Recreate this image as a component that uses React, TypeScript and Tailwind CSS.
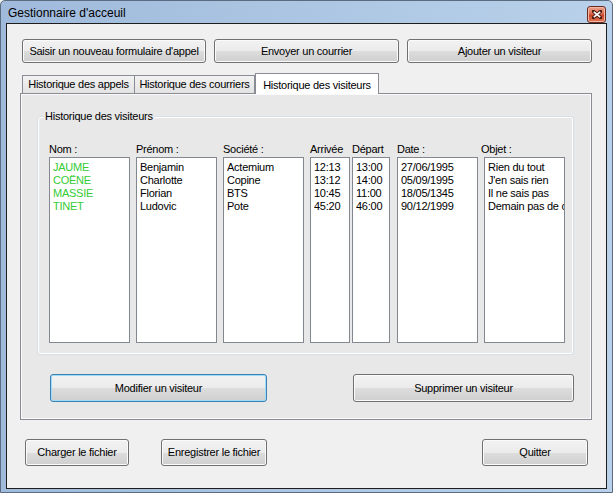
import React from "react";

const btnBase =
  "flex items-center justify-center rounded-[3px] border text-[11px] tracking-[-0.25px] text-black bg-[linear-gradient(#f2f2f2_0%,#ebebeb_50%,#dddddd_50%,#cfcfcf_100%)]";

function WinButton({
  children,
  className = "",
  focused = false,
}: {
  children: React.ReactNode;
  className?: string;
  focused?: boolean;
}) {
  return (
    <button
      className={`${btnBase} ${
        focused
          ? "border-[#3c7fb1] shadow-[inset_0_0_0_1px_#9fdcf8]"
          : "border-[#707070] shadow-[inset_0_0_0_1px_#fbfbfb]"
      } ${className}`}
    >
      {children}
    </button>
  );
}

const columns = [
  { label: "Nom :", w: "w-[81px]", ml: "ml-0", green: true, items: ["JAUME", "COËNE", "MASSIE", "TINET"] },
  { label: "Prénom :", w: "w-[81px]", ml: "ml-[6px]", items: ["Benjamin", "Charlotte", "Florian", "Ludovic"] },
  { label: "Société :", w: "w-[81px]", ml: "ml-[6px]", items: ["Actemium", "Copine", "BTS", "Pote"] },
  { label: "Arrivée", w: "w-[40px]", ml: "ml-[6px]", items: ["12:13", "13:12", "10:45", "45:20"] },
  { label: "Départ", w: "w-[38px]", ml: "ml-[2px]", items: ["13:00", "14:00", "11:00", "46:00"] },
  { label: "Date :", w: "w-[81px]", ml: "ml-[7px]", items: ["27/06/1995", "05/09/1995", "18/05/1345", "90/12/1999"] },
  {
    label: "Objet :",
    w: "w-[81px]",
    ml: "ml-[6px]",
    shiftLabel: true,
    items: ["Rien du tout", "J'en sais rien", "Il ne sais pas", "Demain pas de cours"],
  },
];

export default function App() {
  return (
    <div className="w-[613px] h-[493px] font-['Liberation_Sans',Arial,sans-serif] bg-[#f0f0f0]">
      <div className="w-[613px] h-[493px] flex flex-col border border-[#5b6b80] bg-[linear-gradient(90deg,#9fbadb,#b9d1ea)] rounded-t-[5px] overflow-hidden">
        {/* title bar */}
        <div className="h-[22px] flex items-center justify-between pl-[7px] pr-[6px] shrink-0">
          <span className="text-[12px] text-black leading-none mt-[2px]">Gestionnaire d'acceuil</span>
          <div className="w-[19px] h-[17px] mt-[5px] rounded-[3px] border border-[#6d2a20] bg-[linear-gradient(#eba58f_0%,#dc6a4c_45%,#c8432a_55%,#e07a55_100%)] shadow-[inset_0_0_0_1px_#f0b8a6] flex items-center justify-center">
            <svg width="10" height="9" viewBox="0 0 10 9">
              <path d="M1.5 1.5 L8.5 7.5 M8.5 1.5 L1.5 7.5" stroke="#4a1a12" strokeWidth="3.4" strokeLinecap="square" />
              <path d="M1.8 1.8 L8.2 7.2 M8.2 1.8 L1.8 7.2" stroke="#ffffff" strokeWidth="1.7" />
            </svg>
          </div>
        </div>

        {/* client area */}
        <div className="ml-[5px] mr-[5px] mb-[3px] flex-1 border border-[#1e1e1e] bg-[#f0f0f0] flex flex-col">
          <div className="flex gap-[8px] pl-[15px] pt-[15px]">
            <WinButton className="w-[184px] h-[24px]">Saisir un nouveau formulaire d'appel</WinButton>
            <WinButton className="w-[185px] h-[24px]">Envoyer un courrier</WinButton>
            <WinButton className="w-[185px] h-[24px]">Ajouter un visiteur</WinButton>
          </div>

          {/* tab control */}
          <div className="mt-[10px] ml-[13px] w-[572px]">
            <div className="h-[20px] flex items-end pl-[2px] text-[11px] tracking-[-0.25px] text-black">
              <div className="w-[113px] h-[18px] border border-b-0 border-[#898c95] bg-[linear-gradient(#f2f2f2,#e3e3e3)] flex items-center justify-center">
                Historique des appels
              </div>
              <div className="w-[120px] h-[18px] border border-b-0 border-l-0 border-[#898c95] bg-[linear-gradient(#f2f2f2,#e3e3e3)] flex items-center justify-center">
                Historique des courriers
              </div>
              <div className="relative z-10 w-[124px] h-[21px] -mb-px border border-b-0 border-[#898c95] bg-white flex items-start justify-center pt-[3px]">
                Historique des visiteurs
              </div>
            </div>
            <div className="h-[327px] border border-[#898c95] bg-[#e8e8e8] shadow-[inset_0_0_0_1px_#fafafa] flex flex-col">
              {/* group box */}
              <div className="relative mt-[22px] ml-[16px] w-[537px] h-[239px] rounded-[3px] border border-[#d5dfe5] shadow-[inset_0_0_0_1px_#ffffff]">
                <span className="absolute -top-[7px] left-[6px] px-[1px] bg-[#e8e8e8] text-[11px] leading-[13px] tracking-[-0.25px] text-black">
                  Historique des visiteurs
                </span>
                <div className="flex pl-[11px] pt-[26px]">
                  {columns.map((c) => (
                    <div key={c.label} className={`flex flex-col ${c.ml} ${c.w}`}>
                      <span
                        className={`h-[13px] leading-[13px] text-[11px] tracking-[-0.25px] text-black whitespace-nowrap ${
                          c.shiftLabel ? "-ml-[3px]" : ""
                        }`}
                      >
                        {c.label}
                      </span>
                      <div className="mt-[1px] h-[186px] border border-[#828790] bg-white pl-[3px] pt-[3px] overflow-hidden">
                        {c.items.map((it) => (
                          <div
                            key={it}
                            className={`h-[13px] leading-[13px] text-[11px] tracking-[-0.25px] whitespace-nowrap overflow-hidden ${
                              c.green ? "text-[#33cc33]" : "text-black"
                            }`}
                          >
                            {it}
                          </div>
                        ))}
                      </div>
                    </div>
                  ))}
                </div>
              </div>

              <div className="flex mt-[19px] ml-[29px]">
                <WinButton focused className="w-[217px] h-[28px]">
                  Modifier un visiteur
                </WinButton>
                <WinButton className="ml-[86px] w-[221px] h-[28px]">Supprimer un visiteur</WinButton>
              </div>
            </div>
          </div>

          <div className="flex mt-[19px] ml-[18px]">
            <WinButton className="w-[104px] h-[27px]">Charger le fichier</WinButton>
            <WinButton className="ml-[32px] w-[106px] h-[27px]">Enregistrer le fichier</WinButton>
            <WinButton className="ml-[215px] w-[106px] h-[27px]">Quitter</WinButton>
          </div>
        </div>
      </div>
    </div>
  );
}
